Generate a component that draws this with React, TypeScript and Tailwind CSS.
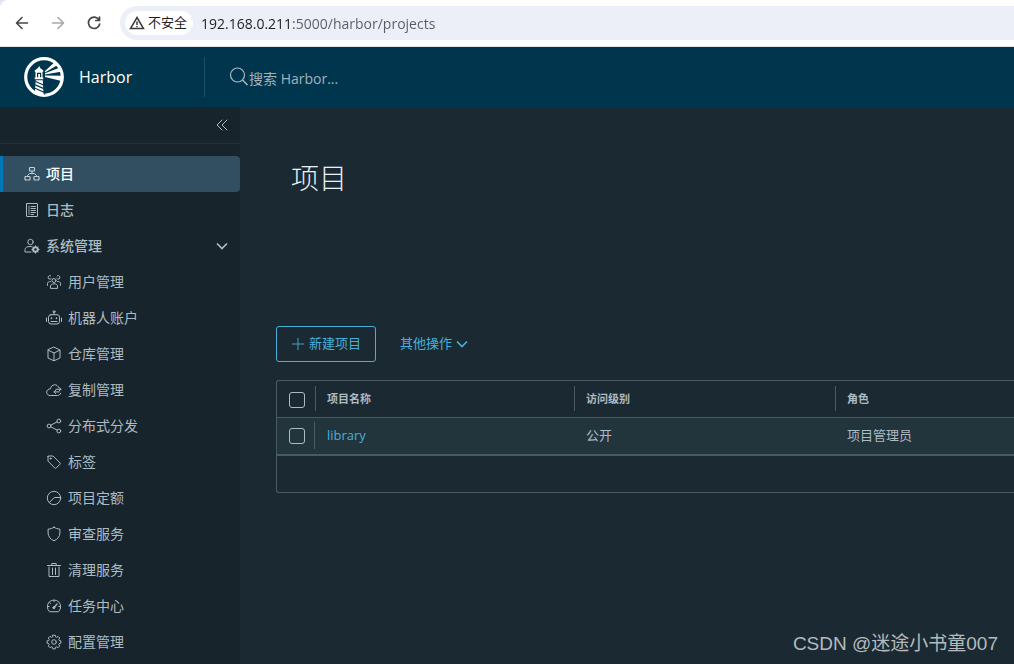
import React, { useState } from 'react';

const Icon: React.FC<{ children: React.ReactNode; className?: string }> = ({ children, className = 'h-4 w-4' }) => (
  <svg
    viewBox="0 0 16 16"
    className={`shrink-0 ${className}`}
    fill="none"
    stroke="currentColor"
    strokeWidth="1"
    strokeLinecap="round"
    strokeLinejoin="round"
    aria-hidden="true"
  >
    {children}
  </svg>
);

const icons = {
  projects: (
    <Icon>
      <rect x="5.500" y="1.500" width="5" height="3.500" rx=".8" strokeWidth="1.200" />
      <rect x="1" y="10.500" width="5" height="3.500" rx=".8" strokeWidth="1.200" />
      <rect x="10" y="10.500" width="5" height="3.500" rx=".8" strokeWidth="1.200" />
      <path d="M8 5v2.500M3.500 10.500V9.500L5.500 7.500h5l2 2v1" />
    </Icon>
  ),
  logs: (
    <Icon>
      <rect x="2.500" y="1.500" width="11" height="13" rx=".5" />
      <path d="M5 4v8.500" strokeWidth=".8" />
      <path d="M7 4.500h4.500M7 6.500h4.500M7 8.500h4.500M7 10.500h4.500M7 12.500h2.500" />
    </Icon>
  ),
  admin: (
    <Icon>
      <circle cx="6.500" cy="4" r="2.700" />
      <path d="M7 14H1v-2.500c0-1.800 2.300-3 5-3 .8 0 1.500.1 2 .3" />
      <circle cx="11.500" cy="11.500" r="2.300" strokeWidth="2" />
      <path d="M11.500 7.800v1M11.500 14.200v1M7.900 11.500h1M14.100 11.500h1M9 9l.6.6M13.400 13.400l.6.6M14 9l-.6.6M9.600 13.400l-.6.6" />
    </Icon>
  ),
  users: (
    <Icon>
      <circle cx="8" cy="6.500" r="2" />
      <path d="M4.500 14v-2c0-1.300 1.500-2.200 3.500-2.200s3.500.9 3.500 2.200v2zM5.300 4.500a1.800 1.800 0 1 1-.8-2.800M10.700 4.500a1.800 1.800 0 1 0 .8-2.800M4.500 7.500C2.500 7.500 1.500 8.300 1.500 9.500v1.800M11.500 7.500c2 0 3 .8 3 2v1.800" />
    </Icon>
  ),
  robot: (
    <Icon>
      <circle cx="8" cy="1.700" r="1" />
      <path d="M8 2.700v2M.5 8v3.500M15.500 8v3.500M5 11.500h6" />
      <rect x="2.500" y="4.700" width="11" height="9.300" rx="2.500" />
      <path d="M5.500 8v.5M10.500 8v.5" strokeWidth="1.500" />
    </Icon>
  ),
  registry: (
    <Icon>
      <path d="M8 1.200l6 2.800v8L8 14.800 2 12V4zM2.200 4.200L8 7l5.800-2.800M8 7v7.600" />
    </Icon>
  ),
  replication: (
    <Icon>
      <path d="M12.500 5.500C12 3.700 10.300 2.600 8.400 2.800 6.200 3 4.700 4.700 4.600 6.700 2.300 6.900.7 8.200.7 10.200s1.500 3.300 3.500 3.300h7.300c1.500 0 2.700-.8 3.100-2.200" />
      <path d="M10 7.300h5M13.300 5.700L15 7.300l-1.700 1.600M13 9.900H8M9.700 8.300L8 9.900l1.700 1.600" />
    </Icon>
  ),
  distribution: (
    <Icon>
      <circle cx="3" cy="8" r="1.900" />
      <circle cx="12.800" cy="3" r="1.900" />
      <circle cx="12.800" cy="13" r="1.900" />
      <path d="M4.700 7.200l6.400-3.300M4.700 8.800l6.400 3.300" />
    </Icon>
  ),
  labels: (
    <Icon>
      <path d="M2 2.500v4.600l6.800 7c.4.400.9.400 1.300 0l3.900-3.900c.4-.4.4-.9 0-1.300L7 2H2.500a.5.5 0 0 0-.5.500z" />
      <circle cx="4.600" cy="4.600" r=".6" />
    </Icon>
  ),
  quotas: (
    <Icon>
      <circle cx="8" cy="8" r="6.700" />
      <path d="M14.500 7.500H8.300L3.500 12.500" />
    </Icon>
  ),
  scanner: (
    <Icon>
      <path d="M8 1.200c1.700 1.200 3.700 1.800 5.900 1.900V7c0 3.400-2.200 6.200-5.900 7.800C4.300 13.200 2.100 10.400 2.100 7V3.100C4.300 3 6.300 2.400 8 1.200z" />
    </Icon>
  ),
  trash: (
    <Icon>
      <path d="M1.500 3.500h13M5.800 3.500V1.500h4.400v2M3 5v9.500h10V5M6.500 6v6.500M9.500 6v6.500" />
    </Icon>
  ),
  jobs: (
    <Icon>
      <path d="M3.300 13.500A6.700 6.700 0 1 1 12.700 13.500z" />
      <path d="M8 2.500v1.200M2 8.500h1.200M12.800 8.500H14M3.900 4.700l.7.700" />
      <path d="M8 9.500L11 6" strokeWidth="1.300" />
      <circle cx="7.800" cy="9.700" r="1" fill="currentColor" />
    </Icon>
  ),
  config: (
    <Icon>
      <circle cx="8" cy="8" r="2.300" />
      <path d="M6.800 1.200h2.400l.4 1.700 1 .4 1.500-.9 1.600 1.600-.9 1.500.4 1 1.700.4v2.300l-1.700.4-.4 1 .9 1.500-1.600 1.600-1.500-.9-1 .4-.4 1.700H6.800l-.4-1.700-1-.4-1.500.9-1.600-1.600.9-1.500-.4-1-1.700-.4V6.900l1.700-.4.4-1-.9-1.500 1.600-1.600 1.500.9 1-.4z" />
    </Icon>
  )
};

const HarborLogo = () => (
  <svg viewBox="0 0 40 40" className="h-10 w-10 shrink-0" aria-hidden="true">
    <circle cx="20" cy="20" r="18.300" fill="none" stroke="#fff" strokeWidth="3.200" />
    <g fill="#fff">
      <path d="M15.300 9l.8 2 3.200 2.500v1.300h-.8v5.700h.8v1.800H10.700v-1.800h.8v-5.700h-.8v-1.300l3.200-2.500z" />
      <path d="M11.800 23.300h7l.7 14.200-8.700-2z" />
      <path d="M20.800 14.300L30.500 5.300l3 2.700L21 15.600z" />
      <path d="M21 16.300L36.800 10.300l1.500 4.200L21 17.500z" />
      <path d="M21 18.500L38.500 18.700l-1 5.300L21 19.900z" />
    </g>
    <path d="M13.600 20.300v-4h3v4" fill="none" stroke="#00364d" strokeWidth="1.200" />
    <path d="M11.500 24.500l8 3.500M11.300 27.900l8.500 3.700M11 31.300l9 4" stroke="#00364d" strokeWidth="1.200" />
    <path d="M20 25l.8 13" stroke="#00364d" strokeWidth=".8" />
  </svg>
);

const Chevron: React.FC<{ className?: string }> = ({ className }) => (
  <svg viewBox="0 0 12 12" className={className} fill="none" stroke="currentColor" strokeWidth="1.700" aria-hidden="true">
    <path d="M1 3.500l5 5 5-5" />
  </svg>
);

const BrowserBar = () => (
  <div className="bg-[#dde5f3]">
    <div className="flex h-[47px] items-start rounded-tl-lg border-b border-[#e0e3e7] bg-white pt-[6px]">
      <div className="flex h-[34px] w-[120px] shrink-0 items-center gap-5 pl-[14px]">
        <button aria-label="Back" className="text-[#474747]">
          <Icon>
            <path d="M13.500 8H2.800M8 2.500L2.500 8 8 13.500" strokeWidth="1.600" />
          </Icon>
        </button>
        <button aria-label="Forward" className="text-[#a8a8a8]">
          <Icon>
            <path d="M2.500 8h10.700M8 2.500L13.500 8 8 13.500" strokeWidth="1.600" />
          </Icon>
        </button>
        <button aria-label="Reload" className="text-[#474747]">
          <Icon>
            <path d="M13 4.800A5.700 5.700 0 1 0 13.700 9M13.500 2v3.500H9.800" strokeWidth="1.700" />
          </Icon>
        </button>
      </div>
      <div className="flex h-[34px] min-w-0 flex-1 items-center rounded-l-full bg-[#eceef8] pl-[5px]">
        <button className="flex h-6 shrink-0 items-center gap-[3px] rounded-full bg-white pr-[6px] pl-1 text-[13px] text-[#1f1f1f]">
          <svg viewBox="0 0 16 16" className="h-4 w-4" fill="none" stroke="#3c3c3c" strokeWidth="1.500" aria-hidden="true">
            <path d="M8 2.500L14.500 13.500h-13z" />
            <path d="M8 6.500v3.500M8 11v1.300" />
          </svg>
          不安全
        </button>
        {/* host part darker than port and path */}
        <input
          aria-label="Address"
          defaultValue="192.168.0.211:5000/harbor/projects"
          className="ml-2 h-6 min-w-0 flex-1 bg-[linear-gradient(to_right,#1f1f1f_91px,#5a5c63_91px)] bg-clip-text text-sm text-transparent caret-black outline-none"
        />
      </div>
    </div>
  </div>
);

const Header = () => (
  <header className="flex h-[60px] items-center bg-[#00364d]">
    <a href="#" className="flex h-10 w-[205px] shrink-0 items-center gap-[15px] border-r border-[#1f4f63] pl-6 text-base text-white">
      <HarborLogo />
      Harbor
    </a>
    <label className="flex flex-1 items-center pl-6 text-[#a9b9c2]">
      <svg viewBox="0 0 20 20" className="h-5 w-5 shrink-0" fill="none" stroke="currentColor" strokeWidth="1.200" aria-hidden="true">
        <circle cx="8.500" cy="8" r="7" />
        <path d="M13.500 13l5 5" strokeWidth="1.500" />
      </svg>
      <input
        aria-label="搜索"
        placeholder="搜索 Harbor..."
        className="h-8 w-64 bg-transparent pt-[2px] text-sm outline-none placeholder:text-[#a0b2bc]"
      />
    </label>
  </header>
);

const adminItems = [
  { icon: icons.users, label: '用户管理' },
  { icon: icons.robot, label: '机器人账户' },
  { icon: icons.registry, label: '仓库管理' },
  { icon: icons.replication, label: '复制管理' },
  { icon: icons.distribution, label: '分布式分发' },
  { icon: icons.labels, label: '标签' },
  { icon: icons.quotas, label: '项目定额' },
  { icon: icons.scanner, label: '审查服务' },
  { icon: icons.trash, label: '清理服务' },
  { icon: icons.jobs, label: '任务中心' },
  { icon: icons.config, label: '配置管理' }
];

const Sidebar = () => {
  const [open, setOpen] = useState(true);

  return (
    <aside className="w-60 shrink-0 bg-[#17242b] text-sm text-[#adbbc4]">
      <div className="flex h-[37px] items-center justify-end border-b border-[#23323a] pr-[10px]">
        <button aria-label="Collapse">
          <Icon>
            <path d="M8 3L3 8l5 5M13 3L8 8l5 5" />
          </Icon>
        </button>
      </div>
      <nav className="mt-3">
        <a
          href="#"
          className="flex h-9 items-center gap-[6px] rounded-r border-l-3 border-[#0079b8] bg-[#324f62] pl-[21px] font-medium text-white"
        >
          <span className="text-[#c3d0d8]">{icons.projects}</span>
          项目
        </a>
        <a href="#" className="flex h-9 items-center gap-[6px] pl-6 font-medium">
          {icons.logs}
          日志
        </a>
        <button
          onClick={() => setOpen(!open)}
          aria-expanded={open}
          className="flex h-9 w-full items-center gap-[6px] pr-3 pl-6 text-left font-medium"
        >
          {icons.admin}
          <span className="flex-1">系统管理</span>
          <Chevron className="h-3 w-3" />
        </button>
        {open &&
          adminItems.map((item) => (
            <a key={item.label} href="#" className="flex h-9 items-center gap-[6px] pl-[46px]">
              {item.icon}
              {item.label}
            </a>
          ))}
      </nav>
    </aside>
  );
};

const Checkbox: React.FC<{ label: string }> = ({ label }) => (
  <input
    type="checkbox"
    aria-label={label}
    className="block h-4 w-4 appearance-none rounded-[3px] border border-[#adbbc4] checked:bg-[#49afd9]"
  />
);

const columns = [
  { title: '项目名称', width: 'w-[259px]' },
  { title: '访问级别', width: 'w-[261px]' },
  { title: '角色', width: '' }
];

const projects = [{ name: 'library', access: '公开', role: '项目管理员' }];

const ProjectsTable = () => (
  <div className="mt-[18px] rounded-l-[3px] border border-r-0 border-[#495a67]">
    <table className="w-full table-fixed border-collapse text-left text-[13px] text-[#adbbc4]">
      <thead>
        <tr className="h-9 border-b border-[#495a67]">
          <th className="w-[38px] p-0 pt-[2px] pl-3">
            <Checkbox label="Select all" />
          </th>
          {columns.map((col) => (
            <th key={col.title} className={`p-0 text-[11px] font-bold ${col.width}`}>
              <div className="flex h-[25px] items-center border-l border-[#495a67] pl-[11px]">{col.title}</div>
            </th>
          ))}
        </tr>
      </thead>
      <tbody>
        {projects.map((project) => (
          <tr key={project.name} className="h-[37px] bg-[#22343c]">
            <td className="p-0">
              <div className="flex h-[27px] items-center border-r border-[#495a67] pl-3">
                <Checkbox label={project.name} />
              </div>
            </td>
            <td className="p-0 pl-3">
              <a href="#" className="text-[#49afd9]">
                {project.name}
              </a>
            </td>
            <td className="p-0 pl-3">{project.access}</td>
            <td className="p-0 pl-3">{project.role}</td>
          </tr>
        ))}
      </tbody>
    </table>
    <div className="h-[38px] border-t-2 border-[#495a67]" />
  </div>
);

const App: React.FC = () => {
  return (
    <div className="relative flex min-h-screen flex-col overflow-hidden bg-[#1b2a32] font-['Open_Sans','Noto_Sans_CJK_SC',sans-serif]">
      <BrowserBar />
      <Header />
      <div className="flex flex-1">
        <Sidebar />
        <main className="min-w-0 flex-1 pl-9">
          <h1 className="mt-[51px] pl-[15px] text-[28px] leading-10 font-light text-[#eaf0f4]">项目</h1>
          <div className="mt-[128px] flex items-center gap-6 text-[13px] text-[#49afd9]">
            <button className="flex h-9 w-[100px] items-center justify-center gap-1 rounded-[3px] border border-[#49afd9]">
              <Icon className="h-[14px] w-[14px]">
                <path d="M8 1.500v13M1.500 8h13" />
              </Icon>
              新建项目
            </button>
            <button className="flex h-9 items-center gap-1">
              其他操作
              <Chevron className="h-3 w-3" />
            </button>
          </div>
          <ProjectsTable />
        </main>
      </div>
      <div className="absolute right-4 bottom-1 font-['Liberation_Sans','Noto_Sans_CJK_SC',sans-serif] text-[19px] leading-8 text-[#b4babd]">
        CSDN @迷途小书童007
      </div>
    </div>
  );
};

export default App;
